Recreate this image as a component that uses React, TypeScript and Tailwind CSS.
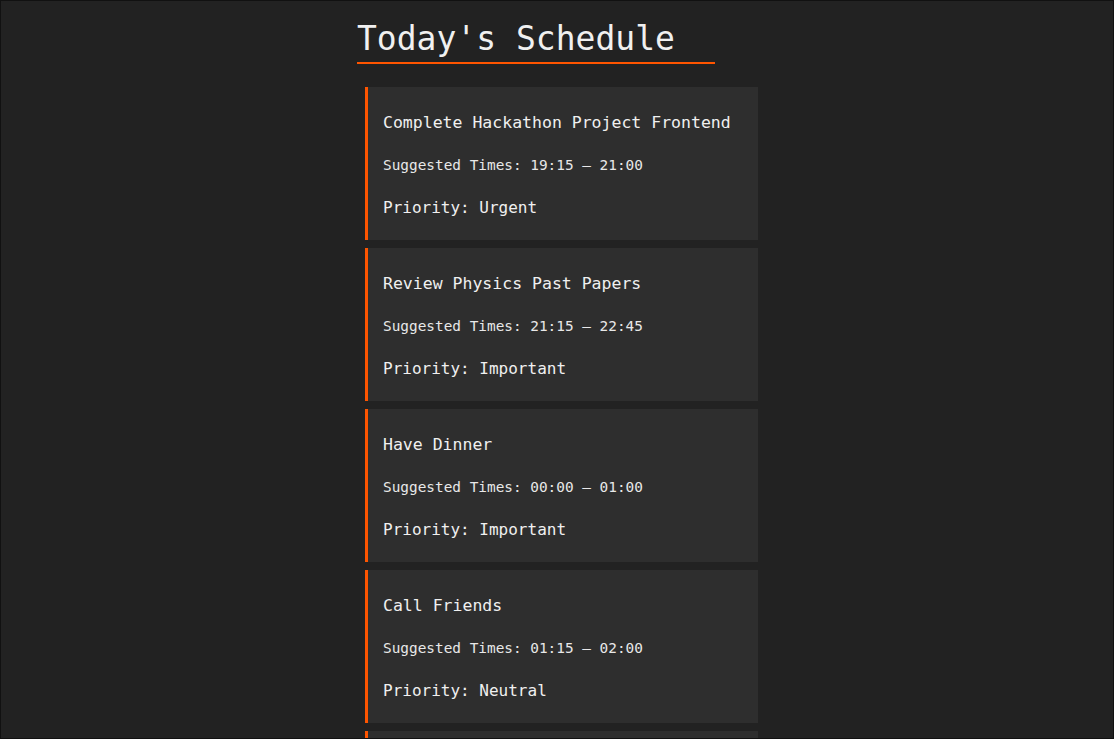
const tasks = [
  { title: 'Complete Hackathon Project Frontend', time: '19:15 – 21:00', priority: 'Urgent' },
  { title: 'Review Physics Past Papers', time: '21:15 – 22:45', priority: 'Important' },
  { title: 'Have Dinner', time: '00:00 – 01:00', priority: 'Important' },
  { title: 'Call Friends', time: '01:15 – 02:00', priority: 'Neutral' },
]

export default function App() {
  return (
    <div className="h-[739px] overflow-hidden border border-[#111] bg-[#222222] font-['DejaVu_Sans_Mono',monospace] text-[#f0f0f0]">
      <div className="ml-[356px] w-[401px] pt-[14px]">
        <h1 className="w-fit border-b-2 border-[#ff5500] pr-[40px] text-[33px] leading-[47px]">
          Today's Schedule
        </h1>
        <div className="mt-[23px] ml-[8px] flex flex-col gap-2">
          {tasks.map((t) => (
            <div key={t.title} className="h-[153px] border-l-[3px] border-[#ff5500] bg-[#2e2e2e] pl-[15px] pt-[25px]">
              <h3 className="text-[16.5px] leading-[22px]">{t.title}</h3>
              <p className="mt-[21px] text-[14.4px] leading-[20px] text-[#e8e8e8]">Suggested Times: {t.time}</p>
              <p className="mt-[22px] text-[16px] leading-[22px]">Priority: {t.priority}</p>
            </div>
          ))}
          {/* next card peeks in at the bottom */}
          <div className="h-[153px] border-l-[3px] border-[#ff5500] bg-[#2e2e2e]" />
        </div>
      </div>
    </div>
  )
}
